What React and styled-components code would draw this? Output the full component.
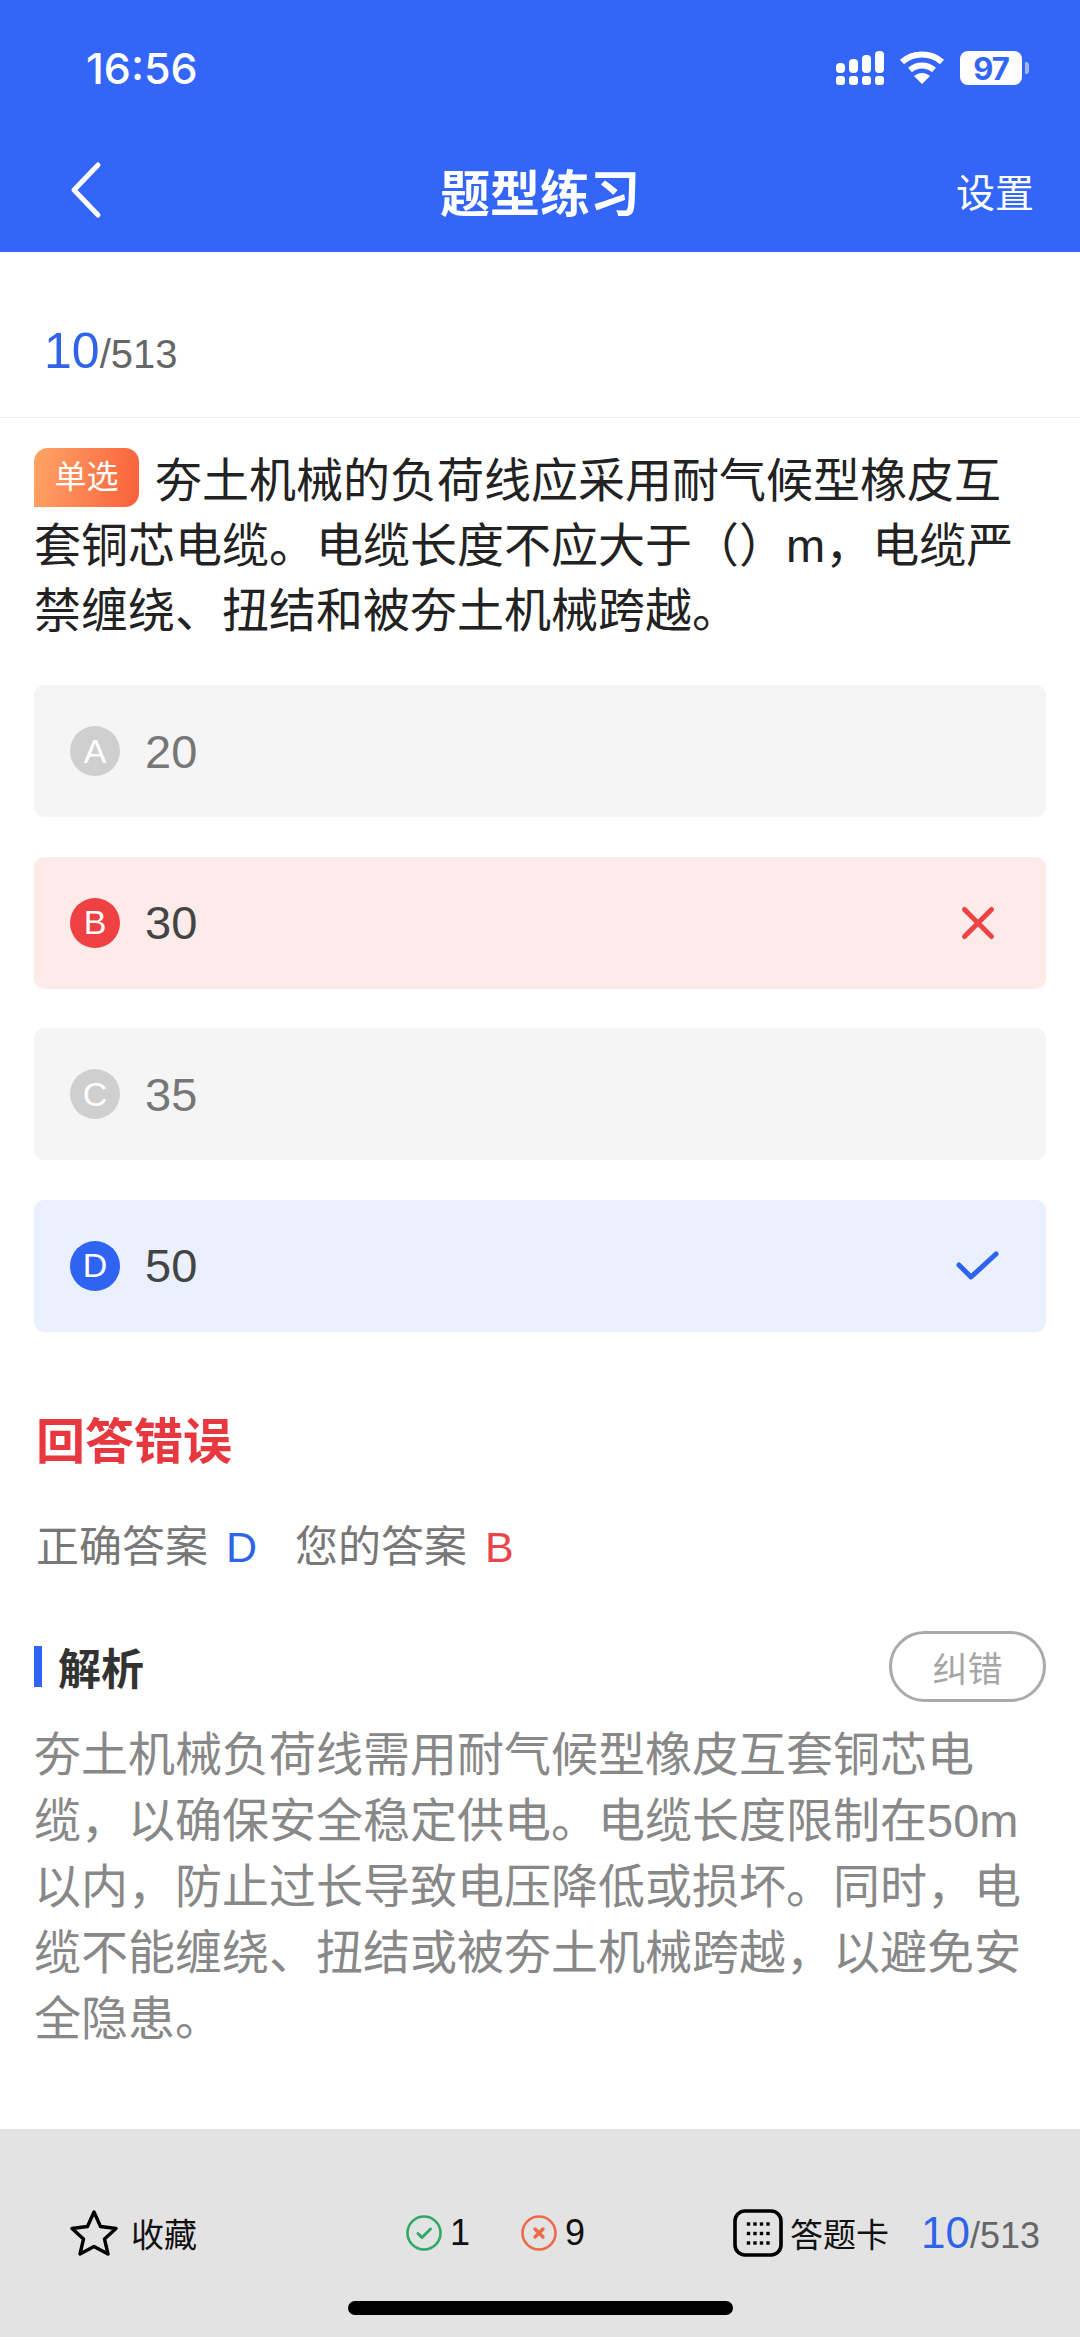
import React from "react";
import styled, { createGlobalStyle } from "styled-components";

const GlobalStyle = createGlobalStyle`
  * { box-sizing: border-box; }
  body {
    margin: 0;
    background: #fff;
    font-family: "Liberation Sans", "Noto Sans CJK SC", sans-serif;
  }
`;

const options = [
  { key: "A", value: "20", state: "idle" },
  { key: "B", value: "30", state: "wrong" },
  { key: "C", value: "35", state: "idle" },
  { key: "D", value: "50", state: "right" },
];

const rowColors = { idle: "#f5f5f5", wrong: "#fdebea", right: "#eaf0fe" };
const dotColors = { idle: "#cfcfcf", wrong: "#ef4043", right: "#2f63f1" };
const textColors = { idle: "#777", wrong: "#444", right: "#444" };

const Page = styled.div`
  width: 1080px;
  min-height: 2337px;
  display: flex;
  flex-direction: column;
`;

const Header = styled.header`
  height: 252px;
  background: #3366f8;
  color: #fff;
`;

const StatusBar = styled.div`
  height: 128px;
  padding: 8px 51px 0 86px;
  display: flex;
  align-items: center;
  justify-content: space-between;
`;

const Time = styled.span`
  font-family: Inter, sans-serif;
  font-size: 43px;
  font-weight: 500;
`;

const NavBar = styled.div`
  height: 124px;
  padding: 0 46px;
  display: grid;
  grid-template-columns: 1fr auto 1fr;
  align-items: center;
`;

const BackIcon = styled.svg`
  width: 40px;
  height: 60px;
  margin-left: 22px;
`;

const NavTitle = styled.div`
  font-size: 50px;
  font-weight: 600;
`;

const NavAction = styled.div`
  justify-self: end;
  font-size: 39px;
`;

const Main = styled.main`
  flex: 1;
`;

const ProgressRow = styled.div`
  height: 166px;
  padding: 70px 44px 0;
  display: flex;
  align-items: baseline;
  border-bottom: 1px solid #f1f1f1;
`;

const Current = styled.span`
  color: #2f63e8;
  font-size: ${(p) => p.size}px;
`;

const Total = styled.span`
  color: #666;
  font-size: ${(p) => p.size}px;
`;

const Question = styled.p`
  margin: 30px 34px 0;
  color: #222;
  font-size: 47px;
  line-height: 65px;
`;

const TypeBadge = styled.span`
  display: inline-block;
  width: 105px;
  height: 59px;
  margin-right: 16px;
  vertical-align: top;
  border-radius: 14px 14px 14px 0;
  background: linear-gradient(100deg, #ffa566, #f9603a);
  color: #fff;
  font-size: 32px;
  line-height: 59px;
  text-align: center;
`;

const OptionList = styled.div`
  margin: 42px 34px 0;
  display: flex;
  flex-direction: column;
  gap: 39.5px;
`;

const Option = styled.div`
  height: 132px;
  padding: 0 50px 0 36px;
  display: flex;
  align-items: center;
  border-radius: 10px;
  background: ${(p) => rowColors[p.$state]};
`;

const OptionDot = styled.span`
  width: 50px;
  height: 50px;
  flex: none;
  display: flex;
  align-items: center;
  justify-content: center;
  border-radius: 50%;
  background: ${(p) => dotColors[p.$state]};
  color: #fff;
  font-size: 34px;
`;

const OptionText = styled.span`
  flex: 1;
  margin-left: 25px;
  color: ${(p) => textColors[p.$state]};
  font-size: 47px;
`;

const Result = styled.h2`
  margin: 75px 36px 0;
  color: #e8383f;
  font-size: 49px;
  font-weight: 700;
  line-height: 70px;
`;

const AnswerRow = styled.div`
  margin: 40px 36px 0;
  display: flex;
  color: #777;
  font-size: 43px;
  line-height: 60px;
`;

const AnswerItem = styled.span`
  margin-right: 38px;
`;

const Mark = styled.span`
  margin-left: 18px;
  color: ${(p) => p.color};
`;

const AnalysisHead = styled.div`
  margin: 54px 34px 0;
  display: flex;
  align-items: center;
  justify-content: space-between;
`;

const AnalysisTitle = styled.div`
  height: 41px;
  padding-left: 16px;
  display: flex;
  align-items: center;
  border-left: 8px solid #2f63f1;
  color: #333;
  font-size: 43px;
  font-weight: 700;
`;

const ReportButton = styled.div`
  width: 157px;
  height: 71px;
  display: flex;
  align-items: center;
  justify-content: center;
  border: 3px solid #aaa;
  border-radius: 36px;
  color: #a6a6a6;
  font-size: 35px;
`;

const Analysis = styled.p`
  margin: 20px 34px 0;
  color: #888;
  font-size: 47px;
  line-height: 66px;
`;

const Footer = styled.footer`
  height: 208px;
  padding: 79px 30px 0 70px;
  background: #e3e3e3;
  color: #111;
`;

const ToolRow = styled.div`
  height: 50px;
  display: grid;
  grid-template-columns: 336px 327px 1fr;
  align-items: center;
`;

const ToolGroup = styled.div`
  display: flex;
  align-items: center;
  gap: ${(p) => p.$gap || 0}px;
`;

const ToolLabel = styled.span`
  font-size: 33px;
  white-space: nowrap;
`;

const Count = styled.span`
  min-width: 63px;
  font-size: 36px;
`;

const FooterProgress = styled.div`
  margin-left: 25px;
  white-space: nowrap;
`;

const HomeBar = styled.div`
  width: 385px;
  height: 14px;
  margin: 43px 0 0 278px;
  border-radius: 7px;
  background: #000;
`;

const BatteryWrap = styled.div`
  display: flex;
  align-items: center;
  gap: 3px;
`;

const Battery = styled.div`
  width: 62px;
  height: 34px;
  display: flex;
  align-items: center;
  justify-content: center;
  border-radius: 8px;
  background: #fff;
  color: #3366f8;
  font-family: Inter, sans-serif;
  font-size: 31px;
  font-weight: 700;
  letter-spacing: -1px;
`;

const BatteryCap = styled.span`
  width: 4px;
  height: 12px;
  border-radius: 0 3px 3px 0;
  background: #9db8fb;
`;

const StatusIcons = styled.div`
  display: flex;
  align-items: center;
  gap: 15px;
`;

const TickSvg = styled.svg`
  margin-right: -3px;
`;

const SignalIcon = () => (
  <svg width="48" height="34" viewBox="0 0 48 34" fill="#fff">
    {[0, 13, 26, 39].map((x, i) => (
      <g key={x}>
        <rect x={x} y={25} width="9" height="9" rx="3" />
        <rect x={x} y={[12, 8, 4, 0][i]} width="9" height={[10, 14, 18, 22][i]} rx="4" />
      </g>
    ))}
  </svg>
);

const WifiIcon = () => (
  <svg width="46" height="34" viewBox="0 0 46 34" fill="none" stroke="#fff" strokeWidth="6">
    <path d="M3 11C14 1 32 1 43 11" />
    <path d="M11 19C18 13 28 13 35 19" />
    <path d="M23 33L15 25C20 21 26 21 31 25Z" fill="#fff" stroke="none" />
  </svg>
);

const CrossIcon = () => (
  <svg width="36" height="36" viewBox="0 0 36 36" stroke="#ee4245" strokeWidth="5" strokeLinecap="round">
    <path d="M4.5 4.5L31.5 31.5M31.5 4.5L4.5 31.5" />
  </svg>
);

const TickIcon = () => (
  <TickSvg width="44" height="32" viewBox="0 0 44 32" fill="none" stroke="#2f63f1" strokeWidth="5" strokeLinecap="round" strokeLinejoin="round">
    <path d="M4 15L16 27L41 4" />
  </TickSvg>
);

const StarIcon = () => (
  <svg width="48" height="48" viewBox="0 0 48 48" fill="none" stroke="#000" strokeWidth="3.4" strokeLinejoin="round">
    <path d="M24 3L30.5 17.5L46 19.5L34.5 30L38 45L24 37.5L10 45L13.5 30L2 19.5L17.5 17.5Z" />
  </svg>
);

const RightIcon = () => (
  <svg width="36" height="36" viewBox="0 0 36 36" fill="none" stroke="#2fa968" strokeWidth="2.6" strokeLinecap="round" strokeLinejoin="round">
    <circle cx="18" cy="18" r="16.5" />
    <path strokeWidth="3" d="M12 18.5L16 22.5L24.5 14" />
  </svg>
);

const WrongIcon = () => (
  <svg width="36" height="36" viewBox="0 0 36 36" fill="none" stroke="#ee6a47" strokeWidth="2.6" strokeLinecap="round">
    <circle cx="18" cy="18" r="16.5" />
    <path strokeWidth="3.4" d="M14 14L22 22M22 14L14 22" />
  </svg>
);

const CardIcon = () => (
  <svg width="50" height="48" viewBox="0 0 50 48" fill="none">
    <rect x="2" y="2" width="46" height="44" rx="10" stroke="#000" strokeWidth="3.6" />
    {[15, 24.5, 34].map((y) =>
      [15.5, 22, 28.5, 35].map((x) => <rect key={`${x}-${y}`} x={x - 1.7} y={y - 1.7} width="3.4" height="3.4" fill="#000" />)
    )}
  </svg>
);

const App = () => (
  <Page>
    <GlobalStyle />
    <Header>
      <StatusBar>
        <Time>16:56</Time>
        <StatusIcons>
          <SignalIcon />
          <WifiIcon />
          <BatteryWrap>
            <Battery>97</Battery>
            <BatteryCap />
          </BatteryWrap>
        </StatusIcons>
      </StatusBar>
      <NavBar>
        <BackIcon viewBox="0 0 40 60" fill="none" stroke="#fff" strokeWidth="5" strokeLinecap="round" strokeLinejoin="round">
          <path d="M30 5L6 30L30 55" />
        </BackIcon>
        <NavTitle>题型练习</NavTitle>
        <NavAction>设置</NavAction>
      </NavBar>
    </Header>

    <Main>
      <ProgressRow>
        <Current size={50}>10</Current>
        <Total size={40}>/513</Total>
      </ProgressRow>

      <Question>
        <TypeBadge>单选</TypeBadge>
        夯土机械的负荷线应采用耐气候型橡皮互套铜芯电缆。电缆长度不应大于（）m，电缆严禁缠绕、扭结和被夯土机械跨越。
      </Question>

      <OptionList>
        {options.map((o) => (
          <Option key={o.key} $state={o.state}>
            <OptionDot $state={o.state}>{o.key}</OptionDot>
            <OptionText $state={o.state}>{o.value}</OptionText>
            {o.state === "wrong" && <CrossIcon />}
            {o.state === "right" && <TickIcon />}
          </Option>
        ))}
      </OptionList>

      <Result>回答错误</Result>
      <AnswerRow>
        <AnswerItem>正确答案<Mark color="#2f63e8">D</Mark></AnswerItem>
        <AnswerItem>您的答案<Mark color="#e8464a">B</Mark></AnswerItem>
      </AnswerRow>

      <AnalysisHead>
        <AnalysisTitle>解析</AnalysisTitle>
        <ReportButton>纠错</ReportButton>
      </AnalysisHead>
      <Analysis>
        夯土机械负荷线需用耐气候型橡皮互套铜芯电缆，以确保安全稳定供电。电缆长度限制在50m以内，防止过长导致电压降低或损坏。同时，电缆不能缠绕、扭结或被夯土机械跨越，以避免安全隐患。
      </Analysis>
    </Main>

    <Footer>
      <ToolRow>
        <ToolGroup $gap={13}>
          <StarIcon />
          <ToolLabel>收藏</ToolLabel>
        </ToolGroup>
        <ToolGroup $gap={8}>
          <RightIcon />
          <Count>1</Count>
          <WrongIcon />
          <Count>9</Count>
        </ToolGroup>
        <ToolGroup $gap={7}>
          <CardIcon />
          <ToolLabel>答题卡</ToolLabel>
          <FooterProgress>
            <Current size={44}>10</Current>
            <Total size={36}>/513</Total>
          </FooterProgress>
        </ToolGroup>
      </ToolRow>
      <HomeBar />
    </Footer>
  </Page>
);

export default App;
